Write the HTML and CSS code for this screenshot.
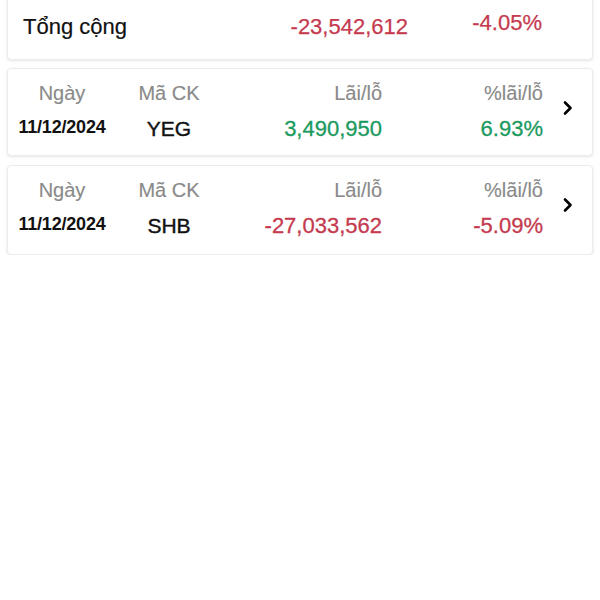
FILE: index.html
```html
<!DOCTYPE html>
<html lang="vi">
<head>
<meta charset="utf-8">
<link rel="stylesheet" href="styles.css">
</head>
<body>
<div class="list">
  <div class="card total">
    <div class="total-label">Tổng cộng</div>
    <div class="total-val red">-23,542,612</div>
    <div class="total-pct red">-4.05%</div>
  </div>

  <div class="card row">
    <div class="hd c1">Ngày</div>
    <div class="hd c2">Mã CK</div>
    <div class="hd c3">Lãi/lỗ</div>
    <div class="hd c4">%lãi/lỗ</div>
    <div class="chev"><svg width="12" height="16" viewBox="0 0 12 16"><path d="M3 2.5 L8.5 8 L3 13.5" fill="none" stroke="#000" stroke-width="2.6" stroke-linecap="round" stroke-linejoin="round"/></svg></div>
    <div class="date c1">11/12/2024</div>
    <div class="sym c2">YEG</div>
    <div class="val c3 green">3,490,950</div>
    <div class="val c4 green">6.93%</div>
  </div>

  <div class="card row last">
    <div class="hd c1">Ngày</div>
    <div class="hd c2">Mã CK</div>
    <div class="hd c3">Lãi/lỗ</div>
    <div class="hd c4">%lãi/lỗ</div>
    <div class="chev"><svg width="12" height="16" viewBox="0 0 12 16"><path d="M3 2.5 L8.5 8 L3 13.5" fill="none" stroke="#000" stroke-width="2.6" stroke-linecap="round" stroke-linejoin="round"/></svg></div>
    <div class="date c1">11/12/2024</div>
    <div class="sym c2">SHB</div>
    <div class="val c3 red">-27,033,562</div>
    <div class="val c4 red">-5.09%</div>
  </div>
</div>
</body>
</html>
```

FILE: styles.css
```css
html, body {
  margin: 0;
  padding: 0;
  background: #ffffff;
  font-family: "Liberation Sans", Arial, sans-serif;
  color: #111;
  overflow: hidden;
}

.list {
  display: flex;
  flex-direction: column;
  gap: 8px;
  margin-top: -20px;
  padding: 0 7px;
}

.card {
  background: #fff;
  border: 1px solid #ececec;
  border-radius: 4px;
  box-shadow: 0 1px 3px rgba(0, 0, 0, 0.10);
}

.red { color: #c53a4f; }
.green { color: #1b9a5e; }

.total {
  display: grid;
  grid-template-columns: 1fr 160px 134px 50px;
  align-items: center;
  padding: 32px 0 18px 15px;
  height: 28px;
}

.total-label {
  font-size: 22px;
  line-height: 28px;
  -webkit-text-stroke: 0.2px #111;
}

.total-val,
.total-pct {
  font-size: 22px;
  line-height: 28px;
  text-align: right;
  -webkit-text-stroke: 0.25px currentColor;
}

.total-val { grid-column: 2; }

.total-pct {
  grid-column: 3;
  position: relative;
  top: -4px;
}

.row {
  display: grid;
  grid-template-columns: 108px 106px 160px 161px 1fr;
  grid-template-rows: 24px 26px;
  row-gap: 11px;
  padding: 12px 0 13px 0;
}

.row.last {
  margin-top: 1px;
  padding-bottom: 15px;
}

.c1 { grid-column: 1; text-align: center; }
.c2 { grid-column: 2; text-align: center; }
.c3 { grid-column: 3; text-align: right; }
.c4 { grid-column: 4; text-align: right; }

.hd {
  grid-row: 1;
  font-size: 20px;
  line-height: 24px;
  color: #8a8a8a;
  -webkit-text-stroke: 0.15px #8a8a8a;
}

.date {
  grid-row: 2;
  font-size: 18px;
  line-height: 22px;
  font-weight: bold;
  color: #111;
  letter-spacing: -0.2px;
}

.sym {
  grid-row: 2;
  font-size: 21px;
  line-height: 26px;
  color: #111;
  -webkit-text-stroke: 0.4px #111;
}

.val {
  grid-row: 2;
  font-size: 22px;
  line-height: 26px;
  -webkit-text-stroke: 0.3px currentColor;
}

.chev {
  grid-column: 5;
  grid-row: 1 / span 2;
  display: flex;
  justify-content: center;
  align-items: center;
  padding-bottom: 8px;
}

.chev svg { display: block; }
```
